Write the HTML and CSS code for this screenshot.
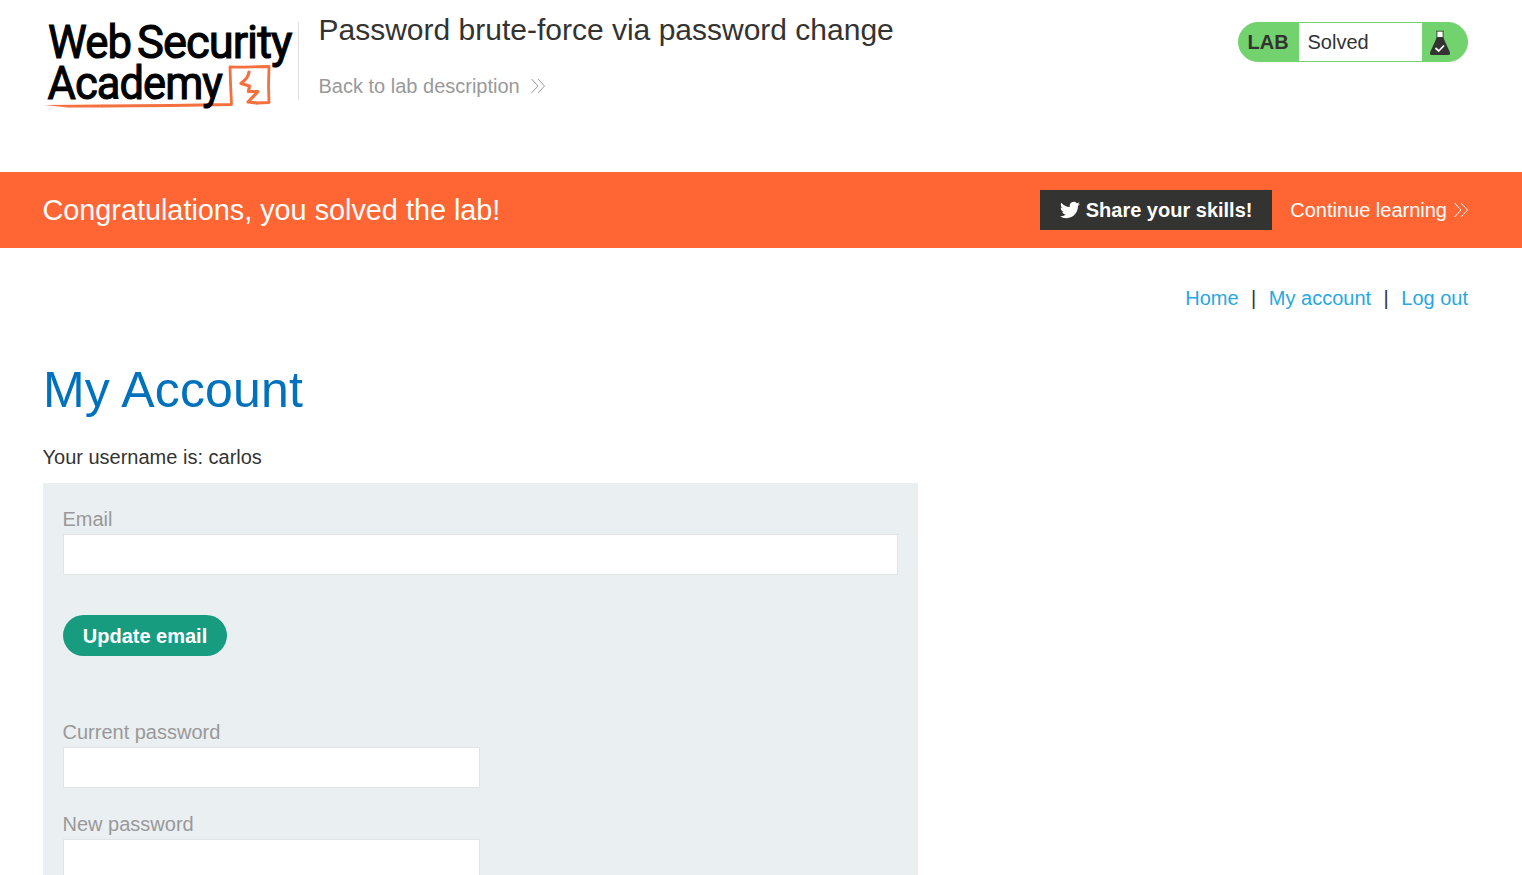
FILE: index.html
```
<!DOCTYPE html>
<html lang="en">
<head>
<meta charset="utf-8">
<title>Password brute-force via password change</title>
<link rel="stylesheet" href="styles.css">
</head>
<body>
<div class="page">
  <header class="lab-header">
    <svg class="logo" viewBox="0 0 256 100" role="img" aria-label="Web Security Academy">
      <g class="logo-mark">
        <path d="M60 95Q130 94.500 188.500 93.500L187.500 72 187 56C200 56.500 213 55.500 226 55.500L225.500 75 226 91.500 213.500 92"/>
        <path class="logo-bolt" d="M206 61C205 66 204 67 198 72.500L206.500 75 205.500 80.500 215 80.500 205 91 213.500 92"/>
        <path class="logo-tail" d="M1 94 60 93.600V96.400L25 96.500z"/>
      </g>
      <text x="5" y="47" textLength="83" lengthAdjust="spacingAndGlyphs">Web</text>
      <text x="94" y="47" textLength="154.500" lengthAdjust="spacingAndGlyphs">Security</text>
      <text x="4.500" y="88" textLength="174.500" lengthAdjust="spacingAndGlyphs">Academy</text>
    </svg>
    <div class="title-block">
      <h2 class="lab-title">Password brute-force via password change</h2>
      <a class="back-link">Back to lab description
        <svg class="chevrons" viewBox="0 0 16 16"><path d="M1.500 1 8 8 1.500 15M8 1 14.500 8 8 15"/></svg>
      </a>
    </div>
    <div class="lab-status">
      <span class="status-label">LAB</span>
      <span class="status-text">Solved</span>
      <span class="status-icon">
        <svg class="flask" viewBox="0 0 20 26"><path class="flask-neck" d="M7 1.500V9M13 1.500V9"/><path class="flask-glass" d="M7.500 1.500h5v6h-5z"/><path class="flask-dark" d="M6 .7h8v.9H6zM7 7h6l7 15.500Q20.500 25 18 25H2Q-.5 25 0 22.500z"/><path class="flask-tick" d="M5.500 18 8.700 21 14 15.500"/></svg>
      </span>
    </div>
  </header>
  <section class="banner">
    <h4 class="banner-title">Congratulations, you solved the lab!</h4>
    <a class="share">
      <svg class="bird" viewBox="0 0 24 24"><path d="M23.950 4.570a10 10 0 01-2.820.770 4.960 4.960 0 002.160-2.720c-.950.550-2 .950-3.130 1.180a4.920 4.920 0 00-8.380 4.480C7.690 8.090 4.070 6.130 1.640 3.160a4.820 4.820 0 00-.670 2.480c0 1.710.870 3.210 2.190 4.090a4.900 4.900 0 01-2.230-.610v.060a4.920 4.920 0 003.950 4.830 5 5 0 01-2.210.080 4.940 4.940 0 004.600 3.420A9.870 9.870 0 010 19.540a14 14 0 007.550 2.210c9.050 0 14-7.500 14-13.980 0-.210 0-.420-.020-.630a9.940 9.940 0 002.420-2.570z"/></svg>
      <span>Share your skills!</span>
    </a>
    <a class="continue">Continue learning
      <svg class="chevrons" viewBox="0 0 16 16"><path d="M1.500 1 8 8 1.500 15M8 1 14.500 8 8 15"/></svg>
    </a>
  </section>
  <nav class="top-links">
    <a>Home</a><span>|</span><a>My account</a><span>|</span><a>Log out</a>
  </nav>
  <main class="account">
    <h1 class="account-title">My Account</h1>
    <p class="username">Your username is: carlos</p>
    <div class="forms">
      <form class="email-form">
        <label class="field"><span class="field-name">Email</span><input class="input" type="email"></label>
        <button class="button" type="button">Update email</button>
      </form>
      <form class="password-form">
        <label class="field"><span class="field-name">Current password</span><input class="input" type="password"></label>
        <label class="field"><span class="field-name">New password</span><input class="input" type="password"></label>
      </form>
    </div>
  </main>
</div>
</body>
</html>
```
FILE: styles.css
```
* { box-sizing: border-box; }
body {
  margin: 0;
  background: #fff;
  color: #333332;
  font: 20px/24px "Liberation Sans", Arial, sans-serif;
}
.page { height: 100vh; overflow: hidden; }
h1, h2, h4, p { margin: 0; font-weight: 400; white-space: nowrap; }

.lab-header {
  display: flex;
  align-items: flex-start;
  height: 172px;
  padding: 11px 54px 0 43px;
}
.logo { width: 256px; height: 100px; flex: none; overflow: visible; }
.logo text {
  font: 400 47px Roboto, sans-serif;
  letter-spacing: -1px;
  fill: #000;
  stroke: #000;
  stroke-width: 1.100;
}
.logo-mark { fill: none; stroke: #f5703f; stroke-width: 2.800; stroke-linejoin: round; stroke-linecap: round; }
.logo-bolt { stroke-width: 3.200; }
.logo-tail { fill: #f5703f; stroke: none; }
.title-block {
  height: 78px;
  margin: 11px 0 0 -1px;
  padding-left: 19.500px;
  border-left: 1px solid #e0e0e0;
  flex: 1;
}
.lab-title { margin-top: -10px; font-size: 30px; line-height: 36px; }
.back-link {
  display: flex;
  align-items: center;
  gap: 10.500px;
  margin-top: 26px;
  color: #999;
}
.chevrons { width: 16px; height: 16px; fill: none; stroke: currentColor; stroke-width: 1; }
.lab-status {
  display: flex;
  width: 230px;
  height: 40px;
  margin-top: 11px;
  border: 1px solid #72d36e;
  border-radius: 20px;
  background: #72d36e;
  line-height: 38px;
  overflow: hidden;
}
.status-label { width: 60px; padding-left: 8.500px; font-weight: 700; line-height: 39px; }
.status-text { width: 123px; padding-left: 8.500px; background: #fff; }
.status-icon { padding: 7px 0 0 8px; }
.flask { display: block; width: 20px; height: 26px; }
.flask-neck { stroke: #333332; fill: none; stroke-width: 1; }
.flask-glass { fill: #fff; }
.flask-dark { fill: #333332; }
.flask-tick { fill: none; stroke: #fff; stroke-width: 1.800; }

.banner {
  display: flex;
  align-items: center;
  height: 76px;
  padding: 0 53px 0 42.500px;
  background: #ff6633;
  color: #fff;
}
.banner-title { flex: 1; font-size: 28.800px; line-height: 36px; }
.share {
  display: flex;
  align-items: center;
  gap: 6px;
  width: 232px;
  height: 40px;
  padding-left: 19.500px;
  background: #333332;
  font-weight: 700;
  white-space: nowrap;
}
.bird { width: 20px; height: 20px; fill: #fff; }
.continue { display: flex; align-items: center; gap: 6px; margin-left: 18px; }

.top-links {
  display: flex;
  justify-content: flex-end;
  gap: 12.500px;
  padding: 38px 54px 0;
}
.top-links a { color: #29a7df; }

.account { padding: 50px 43px 0; }
.account-title { color: #0071bc; font-size: 50px; line-height: 60px; letter-spacing: .15px; }
.username { margin: 25px 0 0 -.5px; }
.forms {
  width: 875px;
  margin-top: 14px;
  padding: 24px 20px;
  background: #eaeff2;
}
.field { display: block; color: #999; }
.field-name { display: block; margin-left: -.5px; }
.input {
  display: block;
  width: 100%;
  height: 41px;
  margin-top: 3px;
  border: 1px solid #e1e4e5;
  background: #fff;
}
.button {
  display: block;
  width: 164px;
  height: 41px;
  margin-top: 40px;
  padding: 2px 0 0;
  border: 0;
  border-radius: 21px;
  background: #189c80;
  color: #fff;
  font: 700 20px "Liberation Sans", Arial, sans-serif;
}
.password-form { width: 417px; margin-top: 64px; }
.password-form .field { margin-bottom: 24px; }
```
